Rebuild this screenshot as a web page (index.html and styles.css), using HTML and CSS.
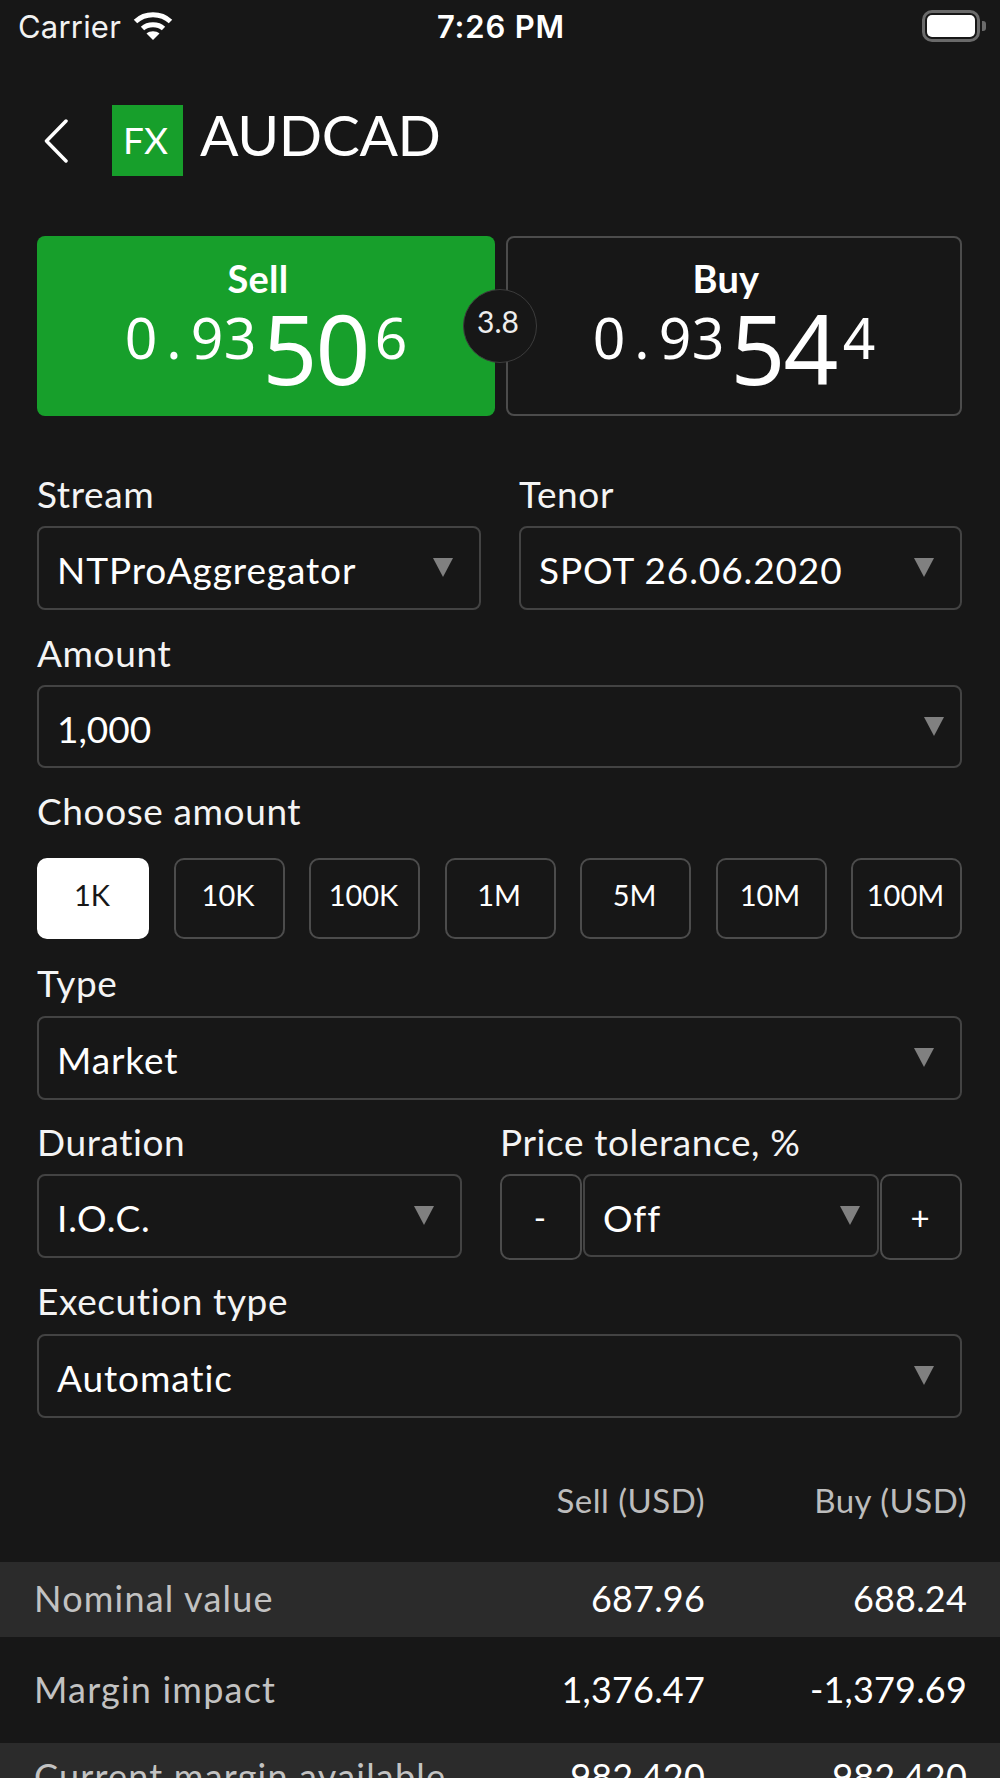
FILE: index.html
```html
<!DOCTYPE html>
<html lang="en">
<head>
<meta charset="utf-8">
<title>AUDCAD</title>
<link rel="stylesheet" href="styles.css">
</head>
<body>
<div class="screen">
  <div class="status">
    <div class="status-left">
      <span class="carrier">Carrier</span>
      <svg class="wifi" viewBox="0 0 40 30" width="40" height="30"><path d="M2.5 11.5C12 2.5 28 2.5 37.5 11.5" fill="none" stroke="#fff" stroke-width="5"/><path d="M9.5 18.5C15 13.5 25 13.5 30.5 18.5" fill="none" stroke="#fff" stroke-width="5"/><path d="M20 30L13.5 23.5C17 20.5 23 20.5 26.5 23.5Z" fill="#fff"/></svg>
    </div>
    <span class="time">7:26 PM</span>
    <div class="battery"><div class="battery-fill"></div><div class="battery-nub"></div></div>
  </div>

  <div class="form">
    <header class="title-row">
      <svg class="back" viewBox="0 0 24 44" width="24" height="44"><path d="M22 2L2.500 22L22 42" fill="none" stroke="#fff" stroke-width="3.500" stroke-linecap="round" stroke-linejoin="round"/></svg>
      <div class="fx">FX</div>
      <h1 class="symbol">AUDCAD</h1>
    </header>

    <div class="quotes">
      <div class="quote quote-sell">
        <div class="quote-label">Sell</div>
        <div class="price"><span class="d">0</span><span class="d">.</span><span class="d">9</span><span class="d">3</span><span class="big">50</span><span class="d">6</span></div>
      </div>
      <div class="quote quote-buy">
        <div class="quote-label">Buy</div>
        <div class="price"><span class="d">0</span><span class="d">.</span><span class="d">9</span><span class="d">3</span><span class="big">54</span><span class="d">4</span></div>
      </div>
      <div class="spread">3.8</div>
    </div>

    <div class="two-col stream-row">
      <div>
        <div class="label">Stream</div>
        <div class="select inset-lg"><span>NTProAggregator</span><i class="arrow"></i></div>
      </div>
      <div>
        <div class="label">Tenor</div>
        <div class="select inset-lg"><span>SPOT 26.06.2020</span><i class="arrow"></i></div>
      </div>
    </div>

    <div class="field amount-field">
      <div class="label">Amount</div>
      <div class="select select-amount inset-sm"><span>1,000</span><i class="arrow"></i></div>
    </div>

    <div class="field choose-field">
      <div class="label label-wide">Choose amount</div>
      <div class="chips">
        <div class="chip chip-on">1K</div>
        <div class="chip">10K</div>
        <div class="chip">100K</div>
        <div class="chip">1M</div>
        <div class="chip">5M</div>
        <div class="chip">10M</div>
        <div class="chip">100M</div>
      </div>
    </div>

    <div class="field type-field">
      <div class="label">Type</div>
      <div class="select inset-lg"><span>Market</span><i class="arrow"></i></div>
    </div>

    <div class="duration-row">
      <div>
        <div class="label">Duration</div>
        <div class="select inset-lg"><span>I.O.C.</span><i class="arrow"></i></div>
      </div>
      <div>
        <div class="label">Price tolerance, %</div>
        <div class="stepper">
          <div class="step">-</div>
          <div class="select select-off"><span>Off</span><i class="arrow"></i></div>
          <div class="step">+</div>
        </div>
      </div>
    </div>

    <div class="field exec-field">
      <div class="label">Execution type</div>
      <div class="select inset-lg"><span>Automatic</span><i class="arrow"></i></div>
    </div>
  </div>

  <div class="table">
    <div class="row row-head"><span></span><span>Sell (USD)</span><span>Buy (USD)</span></div>
    <div class="row row-band row-a"><span class="name">Nominal value</span><span>687.96</span><span>688.24</span></div>
    <div class="row row-b"><span class="name">Margin impact</span><span>1,376.47</span><span>-1,379.69</span></div>
    <div class="row row-band row-c"><span class="name">Current margin available</span><span>982,420</span><span>982,420</span></div>
  </div>
</div>
</body>
</html>
```
FILE: styles.css
```css
* { box-sizing: border-box; }
html, body { margin: 0; padding: 0; background: #171717; }
.screen {
  width: 1000px; height: 1778px; overflow: hidden;
  background: #171717; color: #fff;
  font-family: "Lato", "Noto Sans", sans-serif;
}

/* status bar */
.status { height: 50px; padding: 10px 15px 0 18px; display: flex; align-items: flex-start; justify-content: space-between; position: relative; }
.status-left { display: flex; align-items: center; gap: 12px; height: 34px; }
.carrier { font: 400 31px/34px "Inter", sans-serif; letter-spacing: 0.2px; color: #f2f2f2; }
.wifi { display: block; margin-top: -4px; }
.time { font: 600 31px/34px "Inter", sans-serif; position: absolute; left: 437px; top: 10px; letter-spacing: 0.8px; }
.battery { width: 58px; height: 32px; border: 3px solid #6a6a6a; border-radius: 10px; padding: 2px; position: relative; margin-right: 5px; }
.battery-fill { width: 100%; height: 100%; background: #fff; border-radius: 5px; }
.battery-nub { position: absolute; right: -9px; top: 8px; width: 4px; height: 10px; background: #6a6a6a; border-radius: 0 3px 3px 0; }

/* form column */
.form { padding: 0 38px 0 37px; }
.title-row { margin-top: 55px; height: 71px; display: flex; align-items: center; }
.back { display: block; margin: 0 0 0 7px; }
.fx { width: 71px; height: 71px; margin-left: 44px; background: #179f2b; font-size: 37px; display: flex; align-items: center; justify-content: center; line-height: 1; padding: 0 4px 3px 0; }
.symbol { margin: 0 0 0 17px; font-weight: 400; font-size: 57px; line-height: 59px; height: 71px; letter-spacing: -0.4px; }

.quotes { margin-top: 60px; display: grid; grid-template-columns: 458px 456px; justify-content: space-between; position: relative; height: 180px; }
.quote { border-radius: 8px; height: 180px; text-align: center; padding-top: 22px; }
.quote-sell { background: #179f2b; }
.quote-buy { border: 2px solid #4c4c4c; padding-top: 20px; }
.quote-label { font-size: 38px; font-weight: 700; line-height: 40px; padding-right: 16px; letter-spacing: 0.2px; }
.price { display: flex; justify-content: center; align-items: flex-start; font-family: "Noto Sans", sans-serif; height: 100px; margin-top: -1px; }
.d { font-size: 57px; line-height: 80px; width: 33px; text-align: center; }
.big { font-size: 96px; line-height: 124px; margin: -11px 5px 0 5px; width: 108px; letter-spacing: -2px; }
.spread {
  position: absolute; left: 426px; top: 53px; width: 74px; height: 74px; border-radius: 50%;
  background: #171717; border: 1px solid #3c3c3c; display: flex; align-items: center; justify-content: center;
  font-size: 30px; color: #eee; padding: 0 4px 10px 0;
}

.label { font-size: 37px; line-height: 30px; height: 36px; margin-bottom: 11px; color: #f4f4f4; letter-spacing: 0.6px; white-space: nowrap; }
.select {
  height: 84px; border: 2px solid #434343; border-radius: 8px; display: flex; justify-content: space-between;
  padding: 0 0 0 18px; font-size: 37px; letter-spacing: 0.9px; position: relative; align-items: center;
}
.select > span { margin-top: 3px; }
.arrow { width: 0; height: 0; border-left: 10px solid transparent; border-right: 10px solid transparent; border-top: 19px solid #808080; align-self: flex-start; margin-top: 30px; }
.inset-lg { padding-right: 26px; }
.inset-sm { padding-right: 16px; }

.two-col { margin-top: 63px; display: grid; grid-template-columns: 444px 443px; justify-content: space-between; }
.amount-field { margin-top: 28px; }
.select-amount { height: 83px; }
.select-amount > span { letter-spacing: 0; }
.choose-field { margin-top: 28px; }
.label-wide { margin-bottom: 26px; }
.chips { display: flex; justify-content: space-between; }
.chip { width: 111px; height: 81px; border: 2px solid #4c4c4c; border-radius: 10px; display: flex; align-items: center; justify-content: center; font-size: 29px; padding: 0 2px 8px 0; }
.chip-on { background: #fff; border-color: #fff; color: #171717; width: 112px; }
.type-field { margin-top: 29px; }
.type-field .label { margin-bottom: 12px; }

.duration-row { margin-top: 27px; display: grid; grid-template-columns: 425px 462px; justify-content: space-between; }
.stepper { display: flex; justify-content: space-between; align-items: flex-start; }
.step { width: 82px; height: 86px; border: 2px solid #4c4c4c; border-radius: 10px; display: flex; align-items: center; justify-content: center; font-size: 33px; padding-right: 2px; }
.select-off { width: 296px; height: 83px; padding-right: 17px; }
.exec-field { margin-top: 26px; }
.exec-field .label { margin-bottom: 12px; }

/* summary table */
.table { font-size: 36px; }
.row { display: grid; grid-template-columns: 1fr 240px 262px; padding: 0 33px 0 34px; align-items: center; text-align: right; }
.row > span { letter-spacing: 0.2px; white-space: nowrap; padding-bottom: 3px; }
.row .name { text-align: left; color: #c2c2c2; letter-spacing: 1.2px; }
.row-head { height: 144px; padding-top: 22px; font-size: 33px; color: #bdbdbd; }
.row-head > span { letter-spacing: 0.5px; }
.row-band { background: #2b2b2b; }
.row-a { height: 75px; }
.row-b { height: 106px; }
.row-c { height: 69px; }
```
